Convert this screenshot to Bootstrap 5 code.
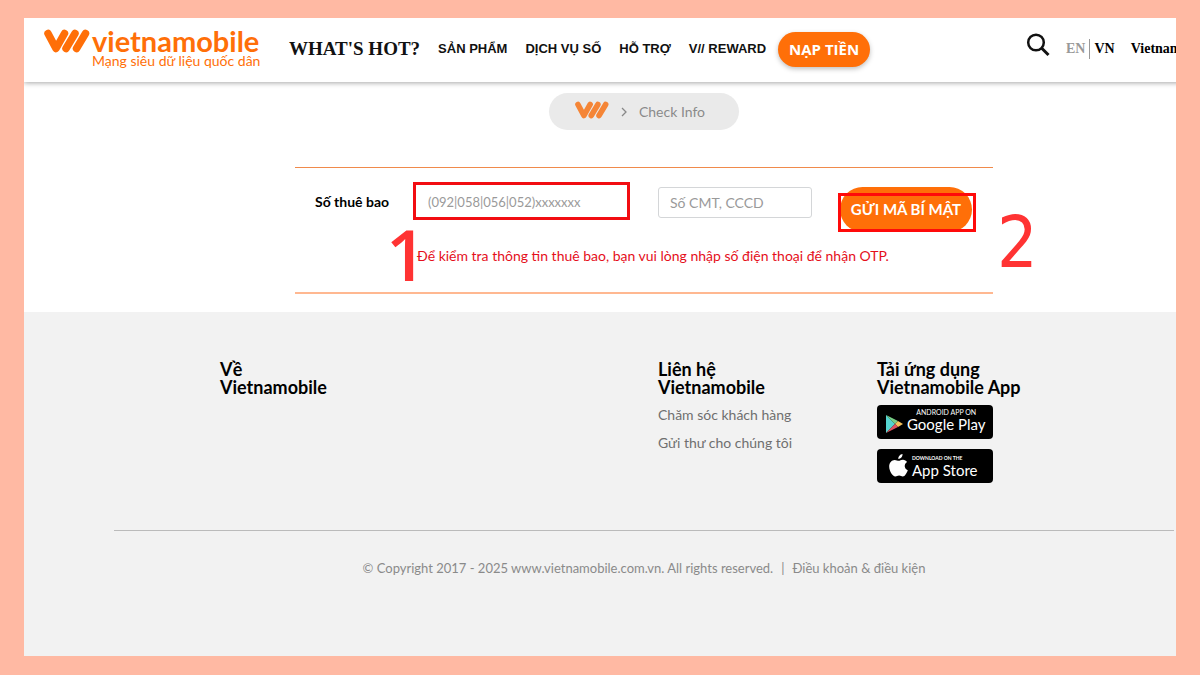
<!DOCTYPE html>
<html lang="vi">
<head>
<meta charset="utf-8">
<meta name="viewport" content="width=device-width, initial-scale=1">
<title>Vietnamobile - Check Info</title>
<link rel="stylesheet" href="https://cdn.jsdelivr.net/npm/bootstrap@5.3.0/dist/css/bootstrap.min.css">
<style>
:root{--vm-orange:#ff6f08;--vm-red:#f20d12}
body{background:#ffb9a3;font-family:Lato,"Open Sans",sans-serif;font-size:14px;color:#000}
a{text-decoration:none;color:inherit}
.frame{padding:18px 24px 19px}
/* the site is wider than its frame, which cuts it off at the right */
.site{width:calc(100% + 88px)}
.topbar{height:64px;padding:0 0 2px 20px;box-shadow:0 1px 5px rgba(0,0,0,.35)}
.brandmark{width:46px;height:24px}
.wordmark{color:var(--vm-orange);width:216px;gap:2px}
.wordmark strong{font-size:29px;line-height:24px;font-weight:700}
.wordmark .tagline{font-size:14px;line-height:16px;white-space:nowrap}
.mainnav{font:bold 13px/20px "Liberation Sans",Arial,sans-serif;gap:18px;color:#111;margin-left:29px}
.hot{font:bold 19px/24px "Liberation Serif",serif}
.topup{font:bold 15px/20px "Open Sans",sans-serif;height:35px;width:92px;margin-left:12px;background:var(--vm-orange);box-shadow:0 2px 5px rgba(0,0,0,.25)}
.langs{font:bold 14px/20px "Liberation Serif",serif;width:198px}
.langs .off{color:#999;border-right:1px solid #999}
.crumbs{width:190px;height:37px;margin-top:11px;background:#eaeaea;color:#8a8a8a;gap:12px;padding-right:8px}
.crumbs .home{color:#f58536}
.check{width:698px;height:127px;margin-top:37px;margin-bottom:18px;border-top:1px solid #f08a4b;border-bottom:2px solid #ffb891;padding:14px 0 0 20px}
.check label{width:98px;font-size:14px;line-height:40px}
.check input{border-radius:3px;border:1px solid #d4d6d8}
.check input::placeholder{color:#9a9a9a}
.check .phone{width:217px;height:38px;border:3px solid var(--vm-red);border-radius:0;padding:2px 12px 0;font-size:13px}
.check .idcard{width:154px;height:31px;padding:0 11px;font-size:14px}
.after{margin:5px 0 0 28px}
.send{width:132px;height:45px;font-size:15px;font-weight:700;background:var(--vm-orange)}
.mark-send{border:3px solid #ff0a0a;left:-2px;right:-4px;top:6px;height:39px;pointer-events:none}
.hint{color:#e50f1b;font-size:14px;line-height:20px;padding:14px 0 0 102px}
.step{line-height:72px;color:#ff3333}
.step-one{left:91px;top:50px;font-family:"Open Sans",sans-serif;font-size:71px;font-weight:600}
.step-two{left:702px;top:39px;font-family:"DejaVu Sans Condensed","Open Sans",sans-serif;font-size:71px}
.bottom{background:#f2f2f2;padding-top:48px;min-height:344px}
.cols{width:876px}
.cols .col-3{padding-left:14px}
.cols h2{font-size:18px;line-height:18px;font-weight:700;margin:0 0 9px}
.cols .flink{color:#6f6f6f;line-height:20px;margin-bottom:8px}
.store{width:116px;height:34px;background:#000;color:#fff;border-radius:4px;margin-bottom:10px;padding-left:8px;gap:4px;white-space:nowrap}
.store .over{font-size:7px;line-height:8px;text-align:center}
.store .name{font-size:15px;line-height:16px}
.store .over-sm{font-size:5px;line-height:7px;font-weight:700}
.rule{width:1060px;border-top:1px solid #bbb;margin-top:37px}
.legal{color:#8a8a8a;font-size:13px;line-height:20px;margin-top:27px}
.legal .sep{margin:0 8px}
</style>
</head>
<body>
<svg class="d-none" aria-hidden="true"><symbol id="vm" viewBox="0 0 46 24"><g fill="none" stroke="currentColor" stroke-width="7.500" stroke-linecap="round" stroke-linejoin="round"><path d="M4 4.500L12 19.500L20.500 4.500"/><path d="M22 19.500L31 4.500M32.500 19.500L41.500 4.500"/></g></symbol></svg>
<div class="frame min-vh-100">
<div class="overflow-hidden bg-white">
<div class="site">
<header class="topbar d-flex align-items-center position-relative bg-white">
  <a href="#" class="d-flex wordmark"><svg class="brandmark flex-shrink-0"><use href="#vm"/></svg><span class="d-flex flex-column"><strong>vietnamobile</strong><span class="tagline">Mạng siêu dữ liệu quốc dân</span></span></a>
  <nav class="mainnav d-flex align-items-center">
    <a href="#" class="hot">WHAT'S HOT?</a><a href="#">SẢN PHẨM</a><a href="#">DỊCH VỤ SỐ</a><a href="#">HỖ TRỢ</a><a href="#">V// REWARD</a>
  </nav>
  <button type="button" class="topup border-0 rounded-pill text-white p-0">NẠP TIỀN</button>
  <button type="button" class="border-0 bg-transparent p-0 ms-auto me-3 mb-2" aria-label="Tìm kiếm"><svg width="24" height="24" viewBox="0 0 24 24" fill="none" stroke="#111" stroke-width="2.500"><circle cx="10" cy="9.500" r="7.800"/><path d="M15.500 15l7 7" stroke-width="3"/></svg></button>
  <div class="langs d-flex"><a href="#" class="off pe-1">EN</a><a href="#" class="ps-1 me-3">VN</a><a href="#">Vietnam</a></div>
</header>
<main class="overflow-hidden">
  <nav class="crumbs rounded-pill d-flex align-items-center justify-content-center mx-auto" aria-label="Breadcrumb">
    <a href="#" class="home d-flex pb-1" aria-label="Vietnamobile"><svg width="34" height="18"><use href="#vm"/></svg></a>
    <svg width="6" height="10" fill="none" stroke="#888" stroke-width="1.300"><path d="M1 1l4 4-4 4"/></svg><span>Check Info</span>
  </nav>
  <form class="check position-relative mx-auto">
    <div class="d-flex align-items-start">
      <label for="phone" class="fw-bold">Số thuê bao</label>
      <input id="phone" class="phone" type="tel" placeholder="(092|058|056|052)xxxxxxx">
      <input class="idcard after" type="text" placeholder="Số CMT, CCCD" aria-label="Số CMT, CCCD">
      <div class="position-relative after"><button type="button" class="send border-0 rounded-pill text-white p-0 d-block">GỬI MÃ BÍ MẬT</button><span class="mark-send position-absolute"></span></div>
    </div>
    <p class="hint mb-0">Để kiểm tra thông tin thuê bao, bạn vui lòng nhập số điện thoại để nhận OTP.</p>
    <span class="step step-one position-absolute">1</span><span class="step step-two position-absolute">2</span>
  </form>
</main>
<footer class="bottom">
  <div class="cols mx-auto"><div class="row gx-0">
    <div class="col-3"><h2>Về<br>Vietnamobile</h2></div>
    <div class="col-3"></div>
    <div class="col-3"><h2>Liên hệ<br>Vietnamobile</h2><a href="#" class="flink d-block">Chăm sóc khách hàng</a><a href="#" class="flink d-block">Gửi thư cho chúng tôi</a></div>
    <div class="col-3"><h2>Tải ứng dụng<br>Vietnamobile App</h2>
      <a href="#" class="store d-flex align-items-center"><svg class="flex-shrink-0 mt-1" width="18" height="20" viewBox="0 0 18 20"><path fill="#55d4d0" d="M1 1v18l9-9z"/><path fill="#78cf86" d="M1 1l9 9 3-3z"/><path fill="#f6c15b" d="M13 7l5 3-5 3-3-3z"/><path fill="#df5260" d="M1 19l9-9 3 3z"/></svg><span class="d-flex flex-column pb-1"><span class="over">ANDROID APP ON</span><span class="name">Google Play</span></span></a>
      <a href="#" class="store d-flex align-items-center"><svg class="flex-shrink-0 ms-1" width="19" height="24" viewBox="0 0 19 24" fill="#fff"><path d="M13.500 0c.2 2.600-1.800 4.900-4.200 5C9 2.600 11.200.4 13.500 0z"/><path d="M9.800 6.800c1.100 0 2.200-1.200 4.200-1.100 1.700.1 3.100.9 4 2.200-3.400 2.200-2.800 6.800.8 8.300-.9 2.600-2.900 6.200-5 6.300-1.400 0-2-.9-3.700-.9s-2.400.9-3.700.9C3.500 22.500.3 17 .2 12.700.1 8.600 2.800 6 5.700 5.900c1.700 0 2.900.9 4.100.9z"/></svg><span class="d-flex flex-column"><span class="over-sm">DOWNLOAD ON THE</span><span class="name">App Store</span></span></a>
    </div>
  </div></div>
  <div class="rule mx-auto"></div>
  <p class="legal text-center mb-0">© Copyright 2017 - 2025 www.vietnamobile.com.vn. All rights reserved.<span class="sep">|</span><a href="#">Điều khoản &amp; điều kiện</a></p>
</footer>
</div></div></div>
<script src="https://cdn.jsdelivr.net/npm/bootstrap@5.3.0/dist/js/bootstrap.bundle.min.js"></script>
</body>
</html>
